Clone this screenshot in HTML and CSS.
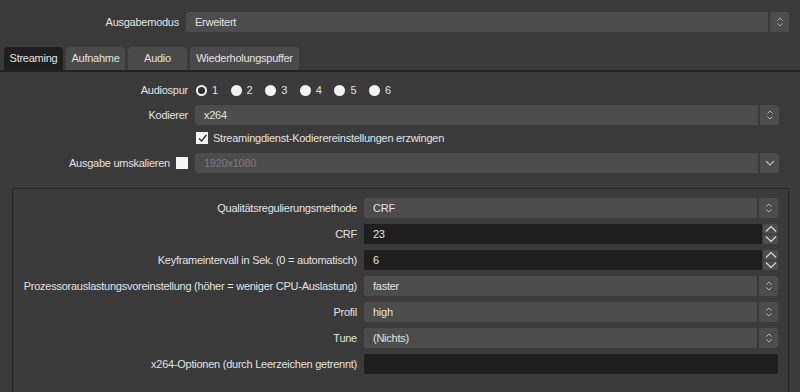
FILE: index.html
```html
<!DOCTYPE html>
<html lang="de">
<head>
  <meta charset="UTF-8" />
  <title>Ausgabe</title>
  <link rel="stylesheet" href="styles.css">
</head>
<body>

<div class="mode-row">
  <span class="label">Ausgabemodus</span>
  <div class="combo combo-wide">
    <span class="value">Erweitert</span>
    <span class="arrows"><svg width="8" height="14" viewBox="0 0 8 14"><path d="M1.5 5.5 L4 3 L6.5 5.5 M1.5 8.5 L4 11 L6.5 8.5" fill="none" stroke="#b0b0b0" stroke-width="1"/></svg></span>
  </div>
</div>

<nav class="tabs">
  <span class="tab active">Streaming</span>
  <span class="tab">Aufnahme</span>
  <span class="tab">Audio</span>
  <span class="tab wide">Wiederholungspuffer</span>
</nav>

<main class="page">
  <div class="row row-audio">
    <span class="label">Audiospur</span>
    <div class="radios">
      <span class="radio-item"><span class="radio on"></span>1</span>
      <span class="radio-item"><span class="radio"></span>2</span>
      <span class="radio-item"><span class="radio"></span>3</span>
      <span class="radio-item"><span class="radio"></span>4</span>
      <span class="radio-item"><span class="radio"></span>5</span>
      <span class="radio-item"><span class="radio"></span>6</span>
    </div>
  </div>

  <div class="row row-enc">
    <span class="label">Kodierer</span>
    <div class="combo">
      <span class="value">x264</span>
      <span class="arrows"><svg width="8" height="14" viewBox="0 0 8 14"><path d="M1.5 5.5 L4 3 L6.5 5.5 M1.5 8.5 L4 11 L6.5 8.5" fill="none" stroke="#b0b0b0" stroke-width="1"/></svg></span>
    </div>
  </div>

  <div class="row row-check">
    <span class="label"></span>
    <label class="check-line">
      <span class="checkbox checked"><svg width="11" height="11" viewBox="0 0 11 11"><path d="M2 5.5 L4.5 8 L9.5 2" fill="none" stroke="#2b2b2b" stroke-width="1.4"/></svg></span>
      Streamingdienst-Kodierereinstellungen erzwingen
    </label>
  </div>

  <div class="row row-rescale">
    <span class="label">Ausgabe umskalieren <span class="checkbox"></span></span>
    <div class="combo disabled">
      <span class="value">1920x1080</span>
      <span class="arrows"><svg width="12" height="8" viewBox="0 0 12 8"><path d="M2 2 L6 6 L10 2" fill="none" stroke="#b0b0b0" stroke-width="1.4"/></svg></span>
    </div>
  </div>

  <section class="encoder-box">
    <div class="erow">
      <span class="label">Qualitätsregulierungsmethode</span>
      <div class="combo">
        <span class="value">CRF</span>
        <span class="arrows"><svg width="8" height="14" viewBox="0 0 8 14"><path d="M1.5 5.5 L4 3 L6.5 5.5 M1.5 8.5 L4 11 L6.5 8.5" fill="none" stroke="#b0b0b0" stroke-width="1"/></svg></span>
      </div>
    </div>
    <div class="erow">
      <span class="label">CRF</span>
      <div class="spin">
        <span class="value">23</span>
        <span class="spin-btns">
          <span class="sbtn"><svg width="14" height="8" viewBox="0 0 14 8"><path d="M2 6.5 L7 1.5 L12 6.5" fill="none" stroke="#cfcfcf" stroke-width="1.4"/></svg></span>
          <span class="sbtn"><svg width="14" height="8" viewBox="0 0 14 8"><path d="M2 1.5 L7 6.5 L12 1.5" fill="none" stroke="#cfcfcf" stroke-width="1.4"/></svg></span>
        </span>
      </div>
    </div>
    <div class="erow">
      <span class="label">Keyframeintervall in Sek. (0 = automatisch)</span>
      <div class="spin">
        <span class="value">6</span>
        <span class="spin-btns">
          <span class="sbtn"><svg width="14" height="8" viewBox="0 0 14 8"><path d="M2 6.5 L7 1.5 L12 6.5" fill="none" stroke="#cfcfcf" stroke-width="1.4"/></svg></span>
          <span class="sbtn"><svg width="14" height="8" viewBox="0 0 14 8"><path d="M2 1.5 L7 6.5 L12 1.5" fill="none" stroke="#cfcfcf" stroke-width="1.4"/></svg></span>
        </span>
      </div>
    </div>
    <div class="erow">
      <span class="label">Prozessorauslastungsvoreinstellung (höher = weniger CPU-Auslastung)</span>
      <div class="combo">
        <span class="value">faster</span>
        <span class="arrows"><svg width="8" height="14" viewBox="0 0 8 14"><path d="M1.5 5.5 L4 3 L6.5 5.5 M1.5 8.5 L4 11 L6.5 8.5" fill="none" stroke="#b0b0b0" stroke-width="1"/></svg></span>
      </div>
    </div>
    <div class="erow">
      <span class="label">Profil</span>
      <div class="combo">
        <span class="value">high</span>
        <span class="arrows"><svg width="8" height="14" viewBox="0 0 8 14"><path d="M1.5 5.5 L4 3 L6.5 5.5 M1.5 8.5 L4 11 L6.5 8.5" fill="none" stroke="#b0b0b0" stroke-width="1"/></svg></span>
      </div>
    </div>
    <div class="erow">
      <span class="label">Tune</span>
      <div class="combo">
        <span class="value">(Nichts)</span>
        <span class="arrows"><svg width="8" height="14" viewBox="0 0 8 14"><path d="M1.5 5.5 L4 3 L6.5 5.5 M1.5 8.5 L4 11 L6.5 8.5" fill="none" stroke="#b0b0b0" stroke-width="1"/></svg></span>
      </div>
    </div>
    <div class="erow">
      <span class="label">x264-Optionen (durch Leerzeichen getrennt)</span>
      <div class="text-input"></div>
    </div>
  </section>
</main>

</body>
</html>
```

FILE: styles.css
```css
* { box-sizing: border-box; margin: 0; padding: 0; }

body {
  font-family: "Liberation Sans", Arial, sans-serif;
  font-size: 11px;
  letter-spacing: -0.25px;
  background: #3a3a3a;
  color: #e2e2e2;
  width: 800px;
  height: 392px;
  overflow: hidden;
}

.label {
  text-align: right;
  white-space: nowrap;
}

/* combo boxes */
.combo {
  flex: 1;
  display: flex;
  height: 20px;
  background: #4c4c4c;
  border-radius: 3px;
  overflow: hidden;
}

.combo .value {
  flex: 1;
  padding-left: 9px;
  line-height: 20px;
  border-right: 2px solid #3a3a3a;
}

.combo .arrows {
  width: 19px;
  display: flex;
  align-items: center;
  justify-content: center;
}

.combo.disabled .value {
  color: #7a7a7a;
}

/* top row */
.mode-row {
  display: flex;
  align-items: center;
  gap: 7px;
  padding: 12px 11px 0 0;
}

.mode-row .label {
  width: 179px;
}

/* tabs */
.tabs {
  display: flex;
  gap: 2px;
  margin-top: 15px;
  padding-left: 4px;
  border-bottom: 2px solid #222;
}

.tab {
  width: 59px;
  height: 23px;
  line-height: 23px;
  text-align: center;
  background: #4a4a4a;
  border-radius: 4px 4px 0 0;
}

.tab + .tab { margin-left: 1px; }
.tab.wide { width: 109px; }

.tab.active {
  background: #1f1f1f;
  width: 59px;
}

/* streaming page */
.page {
  padding-top: 8px;
}

.row {
  display: flex;
  align-items: center;
  gap: 7px;
  height: 20px;
  padding-right: 21px;
}

.row .label {
  width: 188px;
  display: flex;
  justify-content: flex-end;
  align-items: center;
  gap: 6px;
}

.row-enc { margin-top: 5px; }
.row-check { margin-top: 3px; }
.row-rescale { margin-top: 5px; }

.radios {
  display: flex;
  padding-left: 1px;
}

.radio-item {
  display: flex;
  align-items: center;
  gap: 5px;
  width: 34.6px;
}

.radio {
  width: 11px;
  height: 11px;
  border-radius: 50%;
  background: #f2f2f2;
}

.radio.on {
  background: #2a2a2a;
  border: 2.5px solid #f2f2f2;
}

.check-line {
  display: flex;
  align-items: center;
  gap: 5px;
  padding-left: 1px;
}

.checkbox {
  width: 12px;
  height: 12px;
  background: #f4f4f4;
  display: inline-flex;
  align-items: center;
  justify-content: center;
}

/* encoder settings box */
.encoder-box {
  margin: 15px 11px 0 12px;
  border: 1px solid #262626;
  border-bottom: none;
  padding: 9px 10px 20px 0;
  display: flex;
  flex-direction: column;
  gap: 6px;
}

.erow {
  display: flex;
  align-items: center;
  gap: 7px;
  height: 20px;
}

.erow .label {
  width: 344px;
}

.spin {
  flex: 1;
  display: flex;
  height: 20px;
}

.spin .value {
  flex: 1;
  background: #1e1e1e;
  padding-left: 9px;
  line-height: 20px;
}

.spin-btns {
  width: 15px;
  display: flex;
  flex-direction: column;
  gap: 1px;
  margin-left: 1px;
}

.sbtn {
  flex: 1;
  background: #4c4c4c;
  border-radius: 2px;
  display: flex;
  align-items: center;
  justify-content: center;
}

.text-input {
  flex: 1;
  height: 20px;
  background: #1e1e1e;
  border-radius: 2px;
}
```
